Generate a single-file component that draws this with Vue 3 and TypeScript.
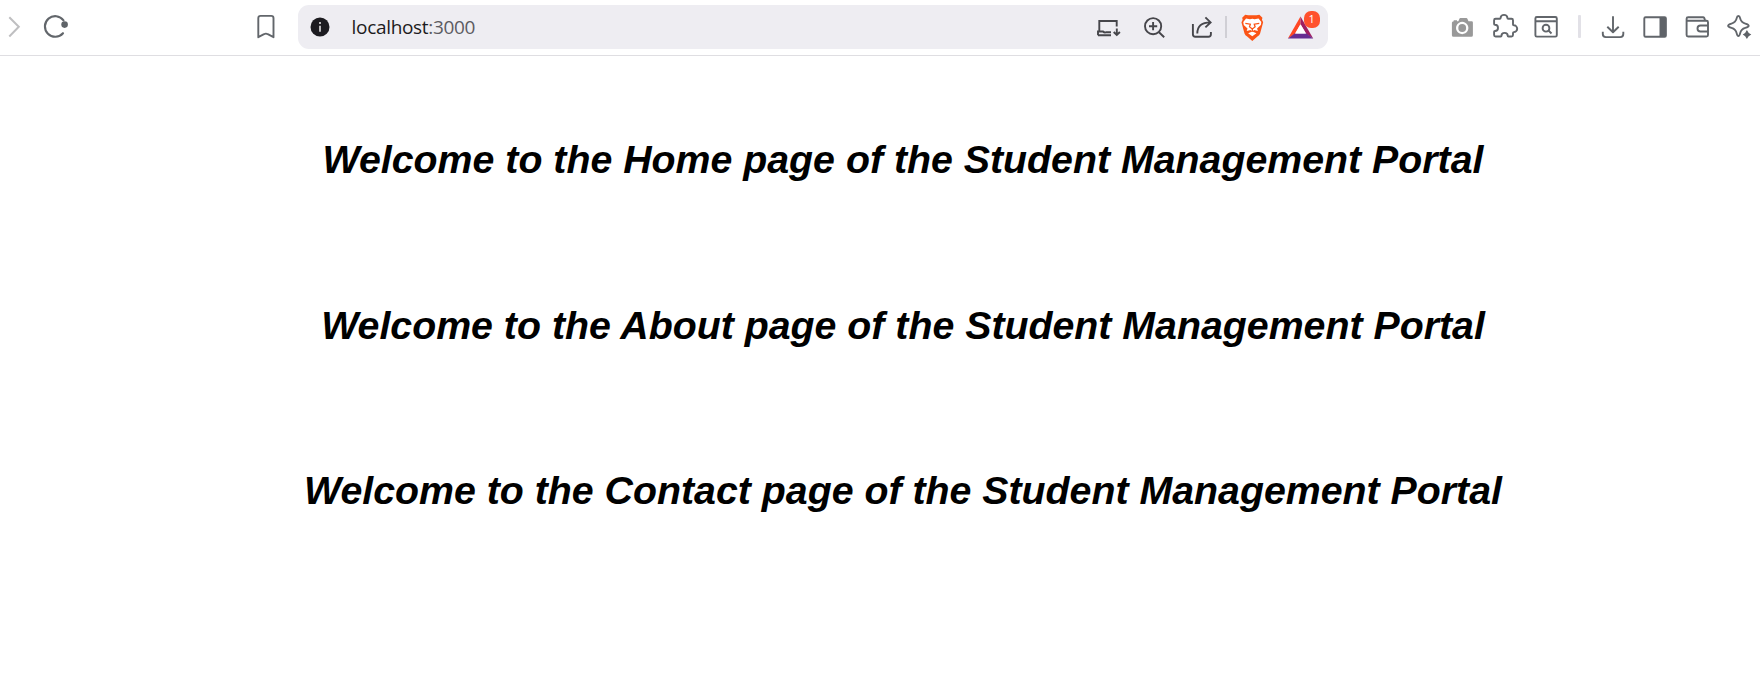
<script setup lang="ts">
const pages: string[] = ['Home', 'About', 'Contact']
</script>

<template>
  <div class="window">
    <header class="toolbar">
      <svg class="forward" viewBox="0 0 35 55"><path d="M9.3 17.3 18.8 26.8 9.3 36.5" /></svg>
      <svg class="icon reload" viewBox="0 0 42 55">
        <path d="M28.5 20.3A10.3 10.3 0 1 0 28 33.2" />
        <circle class="solid" cx="29.6" cy="24.6" r="3.3" />
      </svg>
      <svg class="icon bookmark" viewBox="0 0 42 55">
        <path d="M13.3 37.2V18.2q0-2.3 2.3-2.3h10.6q2.3 0 2.3 2.3v19l-5.7-3q-1.9-1.2-3.8 0z" />
      </svg>

      <div class="address">
        <svg class="info" viewBox="0 0 44 44">
          <circle cx="22" cy="22" r="9.5" fill="#1c1b20" />
          <path d="M22 20.8v6" stroke="#eee" stroke-width="1.5" />
          <circle cx="22" cy="18" r="1" fill="#eee" />
        </svg>
        <span class="url">localhost<span class="port">:3000</span></span>
        <div class="actions">
          <svg class="action" width="47" viewBox="0 0 47 44">
            <path d="M15.3 25.5V16h17.4v5.5M14 30.2v-3.7h5q1.5 1.7 3.5.7h4.5M14 30.2h13M32.8 23.5v6.2M29.7 27l3.1 3 3.1-3" />
          </svg>
          <svg class="action" width="48" viewBox="0 0 48 44">
            <circle cx="22.1" cy="21.2" r="8.1" /><path d="m28 27.2 5.2 5M18 21.2h8.2M22.1 17.1v8.2" />
          </svg>
          <svg class="action" width="46" viewBox="0 0 46 44">
            <path d="M13.9 19v10.2q0 2.5 2.5 2.5h13q2.5 0 2.5-2.5V27M18.3 28.5q0-11 13-11.1M26.4 12.4l5.2 5-5.2 5" />
          </svg>
          <span class="divider"></span>
          <svg class="brand" width="48" viewBox="0 0 48 44">
            <g transform="translate(24.3 0) scale(1.22 1) translate(-24.4 0)">
              <path fill="#fb5416" d="m18.6 9.8 2.4.4h6.8l2.4-.4 2.5 2.9-.4 2.1 1 2.5-2.5 11.2q-.5 2-2.2 3.1L24.4 36l-4.2-4.4q-1.7-1.1-2.2-3.1l-2.5-11.2 1-2.5-.4-2.1z" />
              <path fill="#fff" d="m19.3 13.6 3.2.7 1.9-.6 1.9.6 3.2-.7 2.3 3.3-.4 3-3.1 3.6.7 2.5-3.1-.9-1.5 1.5-1.5-1.5-3.1.9.7-2.5-3.1-3.6-.4-3zM21 28.2l3.4-1.6 3.4 1.6-3.4 3z" />
              <path d="m18.7 18.4 4.1.8-.7 2.6 2.3 2.2 2.3-2.2-.7-2.6 4.1-.8M24.4 24v2.8" fill="none" stroke="#fb5416" stroke-width="1.1" />
            </g>
          </svg>
          <div class="rewards">
            <svg class="brand" width="52" viewBox="0 0 52 44">
              <path fill="#ff4724" d="m24.5 11.5-12.6 22 6.9-4.3 5.7-10z" />
              <path fill="#9e1f63" d="m24.5 11.5 12.7 22-6.7-4.3-6-10z" />
              <path fill="#662d91" d="M11.9 33.5h25.3l-6.8-5.1H18.7z" />
              <path fill="#fff" d="m24.5 19.2-5.4 9.3h10.8z" />
            </svg>
            <span class="badge">1</span>
          </div>
        </div>
      </div>

      <div class="extensions">
        <svg class="icon" viewBox="0 0 42 55">
          <path class="camera" fill-rule="evenodd" d="M12.7 21.2v-1h3.3v1h1.4l1-2.5q.3-.6 1-.6h6q.7 0 1 .6l1.1 2.5h3.2q1.2 0 1.2 1.2v12.8q0 1.6-1.6 1.6H12.5q-1.6 0-1.6-1.6V22.7q0-1.5 1.8-1.5M21.2 21.8a6.2 6.2 0 1 0 .01 0" />
          <circle class="camera" cx="21.2" cy="28" r="3.9" />
        </svg>
        <svg class="icon" viewBox="0 0 42 55">
          <path d="M12.6 18.7h4.2q.8 0 .8-.8a3.4 3 0 0 1 6.8 0q0 .8.8.8h3.3q1.5 0 1.5 1.5v4.3q0 .8.8.8a3.4 3.4 0 0 1 0 6.8q-.8 0-.8.8v2.1q0 1.5-1.5 1.5h-3q-.8 0-.8-.8a3.1 2.8 0 0 0-6.2 0q0 .8-.8.8h-5.1q-1.5 0-1.5-1.5v-3.2q0-.8.8-.8a3.1 3.1 0 0 0 0-6.2q-.8 0-.8-.8v-3.8q0-1.5 1.5-1.5z" />
        </svg>
        <svg class="icon" viewBox="0 0 42 55">
          <rect x="10.4" y="17" width="21.4" height="19.6" rx="1.4" /><path d="M10.4 21.3h21.4M23.5 30.5l3 3" /><circle cx="21" cy="28.2" r="3.4" />
        </svg>
        <span class="separator"></span>
        <svg class="icon" viewBox="0 0 42 55">
          <path d="M21 16.3v15.5M15.3 26.7l5.7 5.6 5.7-5.6M10.8 31.8v2.3q0 3 3 3h14.5q3 0 3-3v-2.3" />
        </svg>
        <svg class="icon" viewBox="0 0 42 55">
          <rect x="10.3" y="17.2" width="21.6" height="19.6" rx="1.3" /><path class="solid" d="M25.5 17h6v20h-6z" />
        </svg>
        <svg class="icon" viewBox="0 0 42 55">
          <path d="M32 22.6v-.4q0-1.5-1.5-1.5H10.6V35q0 1.5 1.5 1.5h18.4q1.5 0 1.5-1.5V22.2M10.6 20.7v-2q0-1.5 1.5-1.5h15q1.5 0 1.9 3.5M32 25.5h-7.5q-3 0-3 3t3 3H32" />
        </svg>
        <svg class="icon" viewBox="0 0 42 55">
          <path d="M20.4 16c1 0 1.4.5 1.7 2.1.7 3.3 2 4.6 5.2 5.5 4.5 1.2 4.5 3.2 0 4.3-3.2.8-4.5 2.2-5.2 5.5-.8 3.5-2.6 3.5-3.4 0-.7-3.3-2-4.7-5.2-5.5-4.5-1.1-4.5-3.1 0-4.3 3.2-.9 4.5-2.2 5.2-5.5.3-1.6.7-2.1 1.7-2.1z" />
          <path class="solid" d="M28.9 30q1.3 3.4 4.4 4.6-3.1 1.2-4.4 4.4-1.3-3.2-4.2-4.4 2.9-1.2 4.2-4.6" />
        </svg>
      </div>
    </header>

    <main class="content">
      <h1 v-for="page in pages" :key="page">Welcome to the {{ page }} page of the Student Management Portal</h1>
    </main>
  </div>
</template>

<style>
body { margin: 0; background: #fff; }
</style>

<style scoped>
.window { height: 696px; overflow: hidden; background: #fff; }
.toolbar { box-sizing: border-box; display: flex; height: 56px; border-bottom: 1px solid #dfdee2; }
.forward { width: 35px; height: 55px; fill: none; stroke: #bfbfc1; stroke-width: 2; }
.icon { width: 42px; height: 55px; flex: none; fill: none; stroke: #62666b; stroke-width: 1.9; stroke-linejoin: round; }
.icon .solid { fill: #5f6368; stroke: none; }
.icon .camera { fill: #999; stroke: none; }
.reload { stroke-width: 2.1; stroke-linecap: round; }
.bookmark { margin-left: 168px; }
.address { display: flex; align-items: center; width: 1030px; height: 44px; margin: 5px 0 0 11px; border-radius: 11px; background: #eeedf2; }
.info { width: 44px; height: 44px; }
.url { margin-left: 9.6px; font: 19px/44px "Open Sans", "Noto Sans", sans-serif; letter-spacing: -0.32px; color: #1c1b20; }
.port { color: #5c5b61; }
.actions { display: flex; align-items: center; margin-left: auto; }
.action { height: 44px; fill: none; stroke: #46464b; stroke-width: 1.9; }
.divider { width: 2px; height: 22px; margin-right: 1px; background: #d0cfd5; }
.brand { display: block; height: 44px; }
.rewards { position: relative; }
.badge { position: absolute; top: 6px; left: 27.5px; width: 16.5px; height: 16.5px; border-radius: 7px; background: #ff512d; color: #fff; font: 11px/16px "Open Sans", sans-serif; text-align: center; }
.extensions { display: flex; margin-left: auto; }
.separator { width: 3px; height: 23px; margin: 15px 11px 0; border-radius: 1px; background: #e2e1e7; }
.content { padding-top: 76.2px; text-align: center; }
h1 { width: 1806px; height: 165.5px; margin: 0; font: italic bold 39.3px/54px "Liberation Sans", Arial, sans-serif; color: #000; white-space: nowrap; }
</style>
